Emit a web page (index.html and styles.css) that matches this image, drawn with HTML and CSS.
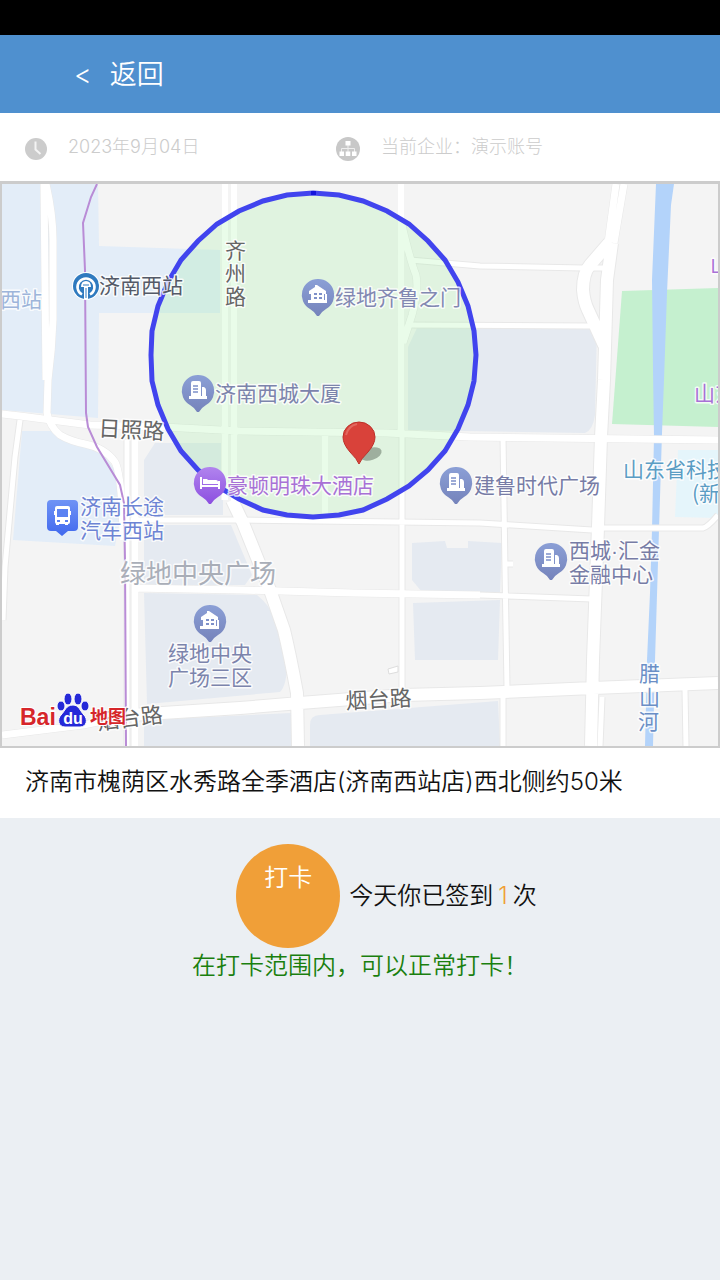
FILE: index.html
```html
<!DOCTYPE html>
<html lang="zh-CN">
<head>
    <meta charset="UTF-8">
    <meta name="viewport" content="width=device-width, initial-scale=1.0">
    <title>打卡</title>
    <link rel="stylesheet" href="styles.css">
</head>
<body>
    <div class="status-bar"></div>
    <header class="header">
        <a class="back" href="#"><span>&lt;</span><span>返回</span></a>
    </header>

    <div class="info">
        <div class="info-item">
            <svg class="icon-clock" viewBox="0 0 22 22">
                <circle cx="11" cy="11" r="11" fill="#ccc"/>
                <path d="M10.500 3.500V11.500L15.500 16" fill="none" stroke="#f4f4f4" stroke-width="2"/>
            </svg>
            <span>2023年9月04日</span>
        </div>
        <div class="info-item">
            <svg class="icon-org" viewBox="0 0 24 24">
                <circle cx="12" cy="12" r="12" fill="#c8c8c8"/>
                <path d="M12 8v7M5.500 15v-3.500h13V15" fill="none" stroke="#eee" stroke-width="1"/>
                <path d="M9.500 4h5v4.500h-5zM3.500 14.500h4.500v4.500H3.500zM9.700 14.500h4.600v4.500H9.700zM16 14.500h4.500v4.500H16z" fill="#fff"/>
            </svg>
            <span>当前企业：演示账号</span>
        </div>
    </div>

    <div class="map">
        <svg viewBox="2 184 716 562">
            <defs>
                <linearGradient id="g-blue" x1="0" y1="0" x2="0" y2="1">
                    <stop offset="0" stop-color="#8b9fd6"/>
                    <stop offset="1" stop-color="#7583bb"/>
                </linearGradient>
                <linearGradient id="g-purple" x1="0" y1="0" x2="0" y2="1">
                    <stop offset="0" stop-color="#b184ee"/>
                    <stop offset="1" stop-color="#8c4fe0"/>
                </linearGradient>
                <linearGradient id="g-bus" x1="0" y1="0" x2="0" y2="1">
                    <stop offset="0" stop-color="#6f93f5"/>
                    <stop offset="1" stop-color="#4169ee"/>
                </linearGradient>
                <path id="pin" d="M0-16A16 16 0 0 1 8 14Q3 17 1 21H-1Q-3 17-8 14A16 16 0 0 1 0-16Z"/>
                <g id="pin-house">
                    <use href="#pin" fill="url(#g-blue)"/>
                    <path fill="#fff" d="M-1-10L8-4V-1H6V5H7V-1H9V8H-10V5H-7V-1H-9V-4L-3-8V-10Z"/>
                    <path fill="#7e90c9" d="M-4-2h3v2h-3zM1-2h3v2H1zM-4 2h3v2h-3zM1 2h3v2H1z"/>
                </g>
                <g id="pin-building">
                    <use href="#pin" fill="url(#g-blue)"/>
                    <path fill="#fff" d="M-7-8Q-7-10-5-10H1Q3-10 3-8V5H4V-4H6Q8-3 8-1V5H9V8H-9V5H-7Z"/>
                    <path stroke="#7e90c9" stroke-width="1.500" d="M-5-5H0M-5-2H0M-5 1H0"/>
                </g>
                <!-- roads grouped by width, each drawn as outline + fill -->
                <path id="road-thin" d="M410 260L480 266L583 268H605M407 325L590 326M20 420L15 457L5 567L3 620M402 437V695M503 437L505 570L507 687M503 697V746M131 520H240L480 523L592 530M603 528H703Q708 527 718 515M480 595L592 599M685 690L686 746M602 697L600 746M505 564H513M127 440V746"/>
                <path id="road-mid" d="M44 184L46 380M46 184Q53 215 53 240V320Q52 350 48 380L47 413Q50 427 60 435Q70 441 85 444Q105 448 115 462Q122 475 123 540M225 184V500M234 184V503M401 184V437M402 225Q410 260 416 275Q419 290 412 315L403 343M325 436V515M135 437V746M616 184L608 243M624 184L614 243M2 414L20 416L90 425L163 427L240 431L387 433L470 437L718 440M133 588L240 590L353 593L480 595M2 735L83 725L133 715"/>
                <path id="road-wide" d="M612 243L607 280L605 347L604 380L601 437L598 527L593 660L591 746M609 243L590 265Q583 273 583 290Q584 302 588 310L604 345M232 500L243 523L270 590L284 630Q290 655 297 693L298 746M131 715L240 708L300 703L403 695L480 693L593 688L718 683"/>
            </defs>

            <rect x="2" y="184" width="716" height="562" fill="#f4f4f4"/>

            <!-- blocks -->
            <path fill="#e3edf8" d="M2 184H98L99 246L220 250V313H99L98 418L2 410ZM22 431H55L97 447L115 470L123 503L115 546L13 540Z"/>
            <path fill="#e5eaf1" d="M144 460L155 443H223V515H144ZM144 525H231L252 575L245 585H144ZM144 593L257 595Q270 605 275 620L287 663Q287 685 280 692L147 704ZM417 328H597L595 415Q593 430 585 433L408 430V347ZM412 543L445 541L447 548H468V541L502 543L500 592H422L412 580ZM413 603L500 600L498 660H415ZM144 720L291 713V746H144ZM310 725Q310 715 320 715L498 701L500 746H310Z"/>
            <path fill="#c5f0cf" d="M622 291L718 288V427L612 424Z"/>
            <path fill="#e5f5fb" d="M678 450H718V518L675 517Z"/>
            <path fill="#b3d3fa" d="M656 184H674L671 205L667 293L664 380L662 433L659 530L655 660L653 746H645L647 660L650 593L652 530L654 437L653 370L652 280Z"/>

            <g class="road-line">
                <use href="#road-thin" stroke-width="7"/>
                <use href="#road-mid" stroke-width="8"/>
                <use href="#road-wide" stroke-width="14"/>
            </g>
            <g class="road-fill">
                <use href="#road-thin" stroke-width="5"/>
                <use href="#road-mid" stroke-width="7"/>
                <use href="#road-wide" stroke-width="12"/>
            </g>
            <path fill="#fff" stroke="#ddd" d="M388 669L398 666V672L389 674Z"/>

            <path class="metro" d="M97 184L91 197L83 223L85 270L86 413L88 427L97 447L120 485L124 503L125 560L126 746"/>

            <!-- check-in range -->
            <polygon class="range" points="313,193 339,195 363,201 387,211 409,224 428,241 445,260 458,282 468,306 474,331 476,355 474,381 468,405 458,429 445,451 428,470 409,486 387,499 363,510 339,515 313,517 287,515 263,510 239,499 217,486 198,470 181,451 168,429 158,405 152,381 151,355 152,331 158,306 168,282 181,260 198,241 217,224 239,211 263,201 287,195"/>
            <rect x="311" y="191" width="5" height="4" fill="#1414dc"/>

            <!-- poi icons -->
            <g transform="translate(86 286)">
                <circle r="14" fill="#fff"/>
                <circle r="13" fill="#2f7abf"/>
                <path d="M-4 8.500A8.500 8.500 0 1 1 4 8.500" fill="none" stroke="#fff" stroke-width="2.500"/>
                <path d="M-5 1Q-5-5 0-5Q5-5 5 1H2V13H-2V1Z" fill="#fff"/>
                <path d="M-3-1H3M0 2V12" stroke="#2f7abf" stroke-width="1"/>
            </g>
            <use href="#pin-house" x="318" y="295"/>
            <use href="#pin-house" x="210" y="621"/>
            <use href="#pin-building" x="198" y="391"/>
            <use href="#pin-building" x="456" y="483"/>
            <use href="#pin-building" x="551" y="559"/>
            <g transform="translate(210 483)">
                <use href="#pin" fill="url(#g-purple)"/>
                <path fill="#fff" d="M-10-6H-8V2H8V-2H10V6H8V4H-8V6H-10ZM-7-4H-3L-2-3H6Q8-3 8-1V1H-7Z"/>
            </g>
            <g transform="translate(62 516)">
                <path fill="url(#g-bus)" d="M-11-16H12Q16-16 16-12V11Q16 15 12 15H6L0 20L-6 15H-11Q-15 15-15 11V-12Q-15-16-11-16Z"/>
                <path fill="#fff" d="M-5-10H6Q8-10 8-8V-5H9V-1H8V6Q8 8 6 8V9H3V8H-3V9H-6V8Q-7 7-7 6V-1H-8V-5H-7V-8Q-7-10-5-10Z"/>
                <path fill="#5b82f2" d="M-5-7H6V1H-5ZM-5 4h3v2h-3zM3 4h3v2H3z"/>
            </g>

            <!-- labels -->
            <g class="label">
                <text x="0" y="307" fill="#9db5da">西站</text>
                <text x="99" y="293" fill="#545a68">济南西站</text>
                <text x="335" y="305" fill="#8288b2">绿地齐鲁之门</text>
                <text x="215" y="401" fill="#7c84ac">济南西城大厦</text>
                <text x="227" y="493" fill="#a871d6">豪顿明珠大酒店</text>
                <text x="474" y="493" fill="#777ca6">建鲁时代广场</text>
                <text x="569" y="558" fill="#777ca6">西城<tspan class="dot">·</tspan>汇金</text>
                <text x="569" y="582" fill="#777ca6">金融中心</text>
                <text x="168" y="661" fill="#7c84ac">绿地中央</text>
                <text x="168" y="685" fill="#7c84ac">广场三区</text>
                <text x="80" y="514" fill="#6d84d4">济南长途</text>
                <text x="80" y="538" fill="#6d84d4">汽车西站</text>
                <text x="623" y="477" fill="#5b9dc4">山东省科技</text>
                <text x="692" y="501" fill="#5b9dc4">(新</text>
                <text x="694" y="401" fill="#a871d6">山东</text>
                <text x="710" y="272" fill="#a871d6">山</text>
                <text x="225" y="258" fill="#666">齐</text>
                <text x="225" y="281" fill="#666">州</text>
                <text x="225" y="304" fill="#666">路</text>
                <text x="639" y="681" fill="#6b8fc6">腊</text>
                <text x="639" y="705" fill="#6b8fc6">山</text>
                <text x="638" y="729" fill="#6b8fc6">河</text>
            </g>
            <g class="label label-road">
                <text transform="translate(98 436) rotate(3)">日照路</text>
                <text transform="translate(346 709) rotate(-3)">烟台路</text>
                <text transform="translate(98 730) rotate(-7)">烟台路</text>
            </g>
            <text class="label label-area" x="120" y="583">绿地中央广场</text>

            <!-- current position -->
            <ellipse cx="371" cy="454" rx="11" ry="6" transform="rotate(-18 371 454)" fill="#5c6b5c" opacity=".5"/>
            <path d="M359 464Q357 459 350 452Q343 444 343 437A16 15 0 0 1 375 437Q375 444 368 452Q361 459 359 464Z" fill="#d9423a" stroke="#bd3029"/>
            <path d="M346 435Q348 426 357 424" fill="none" stroke="#e2685f" stroke-width="2"/>

            <!-- map provider logo -->
            <g class="logo">
                <text class="logo-bai" x="20" y="725">Bai</text>
                <g fill="#2529d8" stroke="#fff" stroke-width="1">
                    <ellipse cx="61" cy="706" rx="4" ry="5"/>
                    <ellipse cx="68" cy="699" rx="4" ry="6"/>
                    <ellipse cx="78" cy="699" rx="4" ry="6"/>
                    <ellipse cx="85" cy="706" rx="4" ry="5"/>
                    <path d="M73 705C79 705 80 711 84 715C88 719 87 727 80 727H65C58 727 57 719 61 715C65 711 66 705 73 705Z"/>
                </g>
                <text class="logo-du" x="73" y="724">du</text>
                <text class="logo-map" x="90" y="723">地图</text>
            </g>
        </svg>
    </div>

    <div class="address">济南市槐荫区水秀路全季酒店(济南西站店)西北侧约50米</div>

    <main class="punch">
        <div class="punch-row">
            <button class="punch-btn" type="button">打卡</button>
            <p>今天你已签到<span class="count">1</span>次</p>
        </div>
        <p class="tip">在打卡范围内，可以正常打卡！</p>
    </main>
</body>
</html>
```
FILE: styles.css
```css
* {
    box-sizing: border-box;
}
body {
    margin: 0;
    min-height: 100vh;
    background-color: #ebeff3;
    font-family: Inter, "Noto Sans CJK SC", sans-serif;
    font-weight: 350;
    font-size: 24px;
    color: #111;
}
p {
    margin: 0;
}
.status-bar {
    height: 35px;
    background-color: #000;
}
.header {
    background-color: #4f90cf;
    padding: 20px 74px 18px;
}
.back {
    display: inline-flex;
    gap: 18px;
    color: #fff;
    font-size: 27px;
    line-height: 40px;
    text-decoration: none;
}
.info {
    display: grid;
    grid-template-columns: 13fr 15fr;
    padding: 20px 25px;
    background-color: #fff;
    color: #ccc;
    font-size: 18px;
    font-weight: 300;
    line-height: 28px;
}
.info-item {
    display: flex;
    align-items: center;
    gap: 21px;
}
.info-item svg {
    margin-top: 3px;
}
.icon-clock {
    width: 22px;
    height: 22px;
}
.icon-org {
    width: 24px;
    height: 24px;
}
.map {
    border: 2px solid #ccc;
    border-top-width: 3px;
}
.map svg {
    display: block;
    width: 100%;
    height: auto;
}
.road-line, .road-fill {
    fill: none;
    stroke-linejoin: round;
}
.road-line {
    stroke: #e8e8e8;
}
.road-fill {
    stroke: #fff;
}
.metro {
    fill: none;
    stroke: #b98cd6;
    stroke-width: 2;
}
.range {
    fill: rgba(144, 238, 144, 0.2);
    stroke: #4144ee;
    stroke-width: 5;
}
.label {
    font-family: "Noto Sans CJK SC", sans-serif;
    font-size: 21px;
    font-weight: 400;
    stroke: rgba(255, 255, 255, 0.8);
    stroke-width: 3;
    stroke-linejoin: round;
    paint-order: stroke;
}
.label .dot {
    font-family: "Liberation Sans", sans-serif;
}
.label-road {
    font-size: 22px;
    fill: #666;
}
.label-area {
    font-size: 26px;
    fill: #a9aeb8;
}
.logo text {
    font-weight: 700;
    fill: #d6262a;
    stroke: #fff;
    stroke-width: 2;
    paint-order: stroke;
}
.logo .logo-bai {
    font-family: "Liberation Sans", sans-serif;
    font-size: 23px;
}
.logo .logo-du {
    font-family: "Liberation Sans", sans-serif;
    font-size: 16px;
    fill: #fff;
    stroke: none;
    text-anchor: middle;
}
.logo .logo-map {
    font-size: 18px;
}
.address {
    padding: 16px 25px 18px;
    background-color: #fff;
    line-height: 36px;
}
.punch {
    padding-top: 26px;
    line-height: 36px;
}
.punch-row {
    display: flex;
    justify-content: center;
    align-items: center;
    gap: 9px;
    padding-left: 53px;
}
.punch-btn {
    width: 104px;
    height: 104px;
    padding: 0 0 36px;
    border: none;
    border-radius: 50%;
    background-color: #f09f38;
    color: #fff;
    font: inherit;
    cursor: pointer;
}
.count {
    margin: 0 5px;
    color: #f09f38;
}
.tip {
    color: #1a7f0e;
    text-align: center;
}
```
